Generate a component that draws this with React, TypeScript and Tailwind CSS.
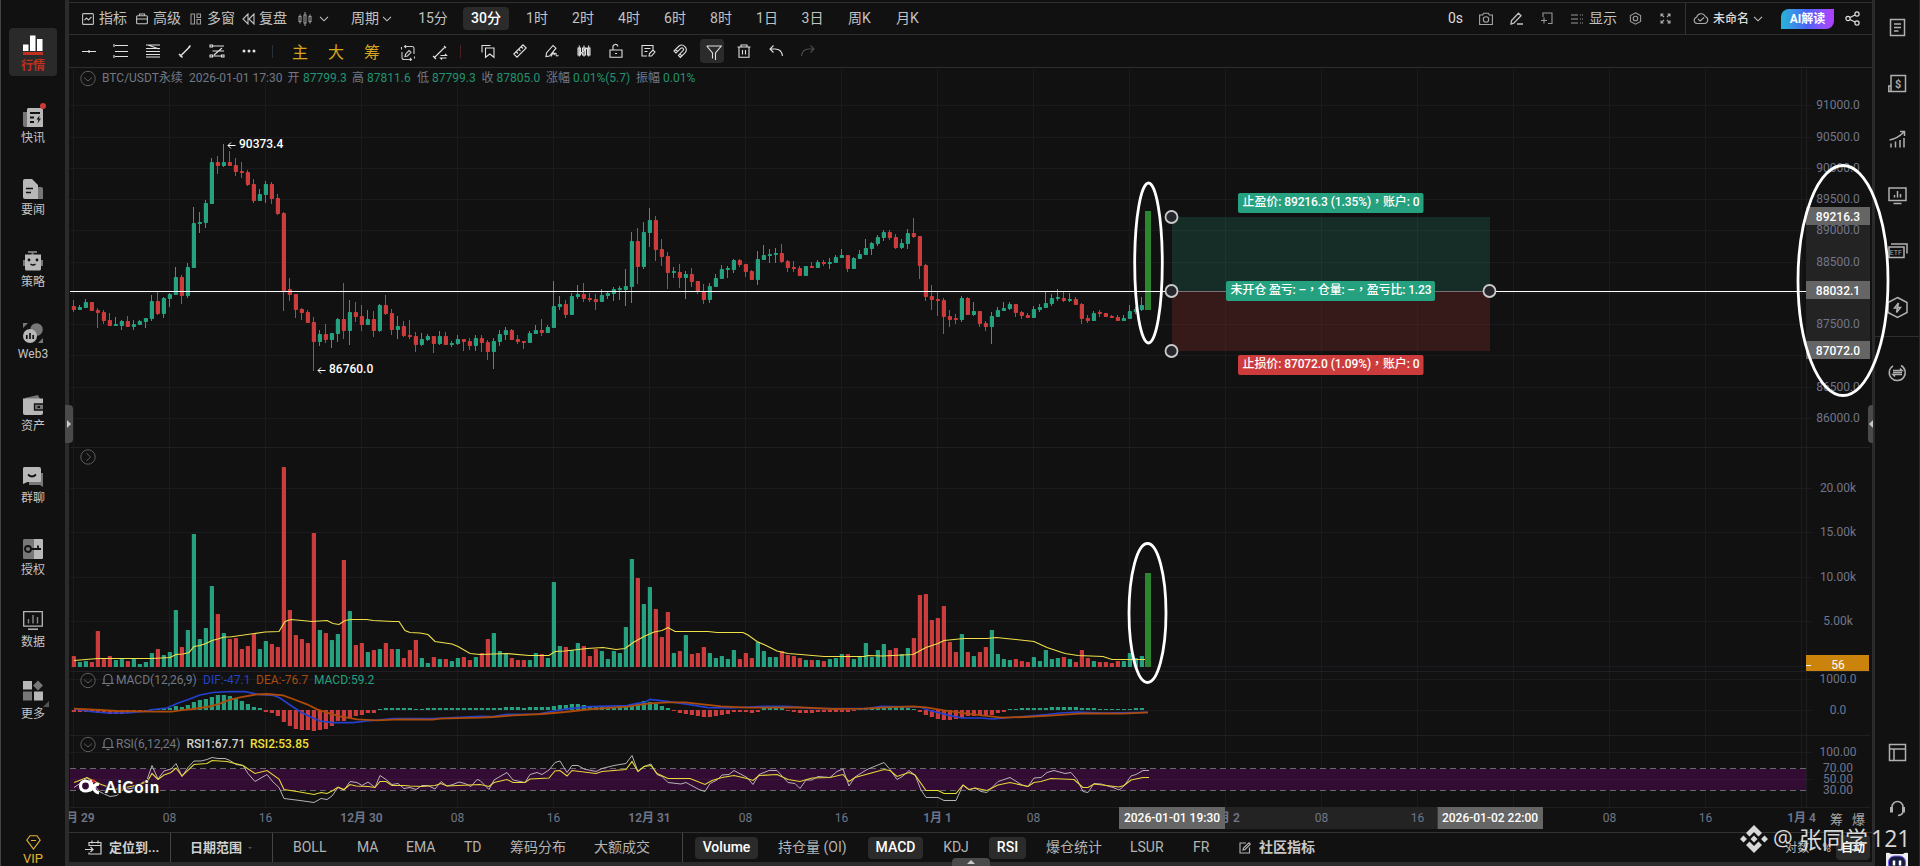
import type { ReactNode } from "react";

// [direction, body top, body bottom, high, low]
const CANDLES: [number, number, number, number, number][] = [
  [0, 306, 310, 300, 312], [1, 307, 310, 305, 310], [1, 302, 308, 299, 308], [0, 302, 311, 302, 311], [0, 310, 313, 308, 328],
  [0, 312, 321, 310, 324], [0, 320, 326, 313, 326], [1, 324, 326, 317, 326], [1, 321, 326, 320, 330], [0, 321, 327, 316, 327],
  [1, 324, 327, 320, 330], [1, 321, 325, 320, 325], [1, 318, 322, 318, 328], [1, 301, 319, 295, 321], [0, 301, 314, 291, 315],
  [1, 298, 314, 297, 318], [1, 294, 299, 293, 307], [1, 277, 295, 267, 295], [0, 277, 296, 275, 304], [1, 267, 296, 263, 298],
  [1, 223, 268, 207, 268], [1, 222, 224, 212, 233], [1, 203, 223, 200, 228], [1, 162, 204, 158, 204], [0, 162, 166, 156, 174],
  [1, 162, 166, 144, 167], [0, 162, 166, 151, 166], [0, 165, 172, 158, 176], [0, 171, 173, 162, 178], [0, 172, 185, 170, 186],
  [0, 184, 201, 179, 203], [1, 194, 201, 189, 201], [1, 184, 195, 181, 203], [0, 184, 199, 182, 204], [0, 198, 214, 194, 215],
  [0, 213, 291, 212, 311], [0, 289, 295, 278, 301], [0, 294, 310, 294, 318], [0, 309, 313, 308, 320], [0, 312, 323, 310, 323],
  [0, 322, 342, 317, 371], [1, 334, 342, 330, 346], [0, 334, 340, 324, 343], [1, 333, 340, 333, 348], [1, 319, 334, 318, 342],
  [0, 319, 331, 283, 339], [1, 312, 331, 300, 345], [0, 312, 317, 302, 322], [0, 316, 325, 305, 331], [1, 319, 325, 310, 325],
  [0, 319, 331, 311, 337], [1, 305, 331, 304, 332], [0, 305, 314, 295, 315], [0, 313, 330, 309, 335], [1, 326, 330, 316, 339],
  [0, 326, 336, 321, 337], [0, 335, 337, 320, 339], [0, 336, 345, 332, 352], [1, 339, 345, 333, 346], [1, 336, 340, 334, 341],
  [0, 336, 344, 336, 353], [1, 336, 344, 331, 345], [0, 336, 345, 332, 345], [1, 343, 345, 341, 347], [1, 339, 344, 335, 345],
  [0, 339, 342, 339, 351], [0, 341, 346, 338, 350], [1, 338, 346, 335, 351], [0, 338, 343, 335, 352], [0, 342, 352, 340, 360],
  [1, 341, 352, 338, 369], [1, 334, 342, 330, 346], [1, 330, 335, 327, 340], [0, 330, 340, 329, 340], [0, 339, 342, 335, 344],
  [0, 341, 343, 341, 349], [1, 333, 343, 331, 343], [1, 330, 334, 325, 334], [0, 330, 333, 319, 336], [1, 327, 333, 325, 333],
  [1, 306, 328, 281, 328], [1, 304, 307, 296, 310], [0, 304, 315, 300, 318], [1, 296, 315, 293, 315], [1, 294, 297, 285, 299],
  [0, 294, 299, 283, 302], [0, 298, 300, 293, 302], [0, 299, 302, 294, 310], [1, 295, 302, 289, 302], [1, 293, 296, 292, 299],
  [1, 289, 294, 287, 301], [1, 288, 290, 286, 300], [1, 286, 290, 269, 306], [1, 241, 287, 232, 303], [0, 241, 267, 228, 284],
  [1, 232, 267, 222, 269], [1, 220, 233, 208, 247], [0, 220, 250, 216, 261], [0, 249, 257, 239, 266], [0, 256, 273, 252, 289],
  [1, 271, 273, 267, 278], [0, 272, 278, 264, 288], [1, 274, 278, 271, 299], [0, 274, 282, 268, 287], [0, 281, 292, 281, 294],
  [0, 291, 300, 284, 304], [1, 286, 300, 283, 303], [1, 278, 287, 274, 287], [1, 269, 279, 265, 279], [1, 268, 270, 266, 278],
  [1, 260, 270, 259, 273], [0, 260, 265, 259, 267], [0, 264, 272, 264, 277], [0, 271, 280, 270, 280], [1, 259, 280, 251, 285],
  [1, 255, 260, 245, 260], [1, 254, 256, 249, 263], [1, 253, 255, 248, 263], [0, 253, 262, 244, 263], [0, 261, 268, 260, 272],
  [0, 267, 269, 261, 272], [0, 268, 276, 266, 276], [1, 266, 276, 266, 276], [0, 266, 268, 262, 268], [1, 262, 268, 260, 268],
  [0, 262, 264, 260, 266], [1, 262, 264, 258, 269], [1, 257, 263, 255, 263], [1, 255, 258, 249, 258], [0, 255, 269, 255, 272],
  [1, 258, 269, 257, 269], [1, 254, 259, 250, 259], [1, 248, 255, 239, 255], [1, 243, 249, 242, 255], [1, 237, 244, 235, 246],
  [1, 232, 238, 230, 241], [0, 232, 238, 230, 240], [0, 237, 248, 234, 249], [1, 243, 248, 239, 249], [1, 233, 244, 229, 249],
  [0, 233, 237, 218, 238], [0, 236, 266, 236, 279], [0, 265, 297, 264, 301], [0, 296, 300, 285, 310], [0, 299, 301, 291, 316],
  [0, 300, 317, 298, 334], [0, 316, 320, 310, 327], [0, 318, 320, 314, 324], [1, 298, 320, 296, 322], [0, 298, 315, 297, 315],
  [1, 311, 315, 302, 316], [0, 311, 324, 311, 327], [0, 323, 327, 321, 331], [1, 316, 327, 312, 344], [1, 310, 317, 307, 317],
  [1, 308, 311, 302, 311], [1, 304, 309, 302, 310], [0, 304, 313, 304, 317], [0, 312, 316, 311, 319], [0, 315, 318, 313, 318],
  [1, 309, 318, 306, 318], [1, 307, 310, 304, 312], [1, 303, 308, 292, 308], [1, 298, 304, 294, 306], [1, 297, 299, 289, 301],
  [0, 298, 301, 292, 302], [1, 299, 301, 293, 302], [0, 299, 305, 297, 305], [0, 304, 319, 303, 324], [0, 318, 321, 315, 323],
  [1, 313, 321, 311, 321], [0, 312, 314, 310, 317], [0, 313, 317, 313, 317], [0, 316, 318, 315, 318], [0, 317, 321, 315, 321],
  [1, 318, 321, 315, 321], [1, 311, 319, 305, 319], [1, 309, 312, 307, 314], [1, 305, 310, 297, 311],
];

const VOLUMES = [
  11, 5, 6, 5, 36, 8, 11, 7, 8, 6, 8, 3, 5, 14, 18, 12, 15, 57, 20, 37, 133, 28, 39, 81, 53, 34, 28, 29, 18, 21,
  33, 18, 26, 23, 20, 200, 57, 32, 28, 24, 134, 37, 34, 27, 33, 107, 56, 22, 24, 15, 17, 18, 24, 18, 18, 9, 17, 27, 9, 4,
  10, 8, 8, 6, 9, 10, 7, 10, 14, 28, 34, 16, 13, 9, 7, 7, 7, 14, 13, 9, 85, 21, 20, 17, 24, 21, 11, 18, 16, 8,
  16, 14, 40, 108, 89, 63, 80, 58, 30, 55, 14, 16, 32, 13, 14, 20, 14, 9, 11, 8, 17, 8, 14, 9, 25, 16, 10, 10, 16, 12,
  11, 9, 7, 7, 7, 6, 8, 9, 13, 13, 8, 10, 24, 10, 17, 23, 17, 19, 13, 19, 29, 72, 73, 47, 49, 61, 25, 15, 33, 15,
  11, 15, 20, 37, 13, 8, 7, 8, 6, 5, 10, 6, 17, 8, 9, 10, 8, 5, 17, 9, 6, 5, 5, 4, 6, 6, 14, 9, 11,
];

const MACD_BARS = [
  -2, -2, -2, -2, -3, -3, -4, -4, -4, -3, -3, -2, -2, 1, 1, 2, 2, 4, 3, 5, 8, 10, 11, 13, 15, 15, 14, 11, 9, 6,
  3, 2, -2, -3, -6, -12, -16, -19, -20, -20, -21, -20, -19, -16, -11, -11, -8, -6, -5, -3, -3, 1, 2, 2, 2, 2, 2, 1, 1, 2,
  2, 2, 2, 2, 2, 2, 2, 2, 2, 2, 2, 2, 3, 3, 3, 2, 3, 3, 3, 3, 4, 5, 5, 6, 6, 5, 4, 4, 4, 3,
  3, 4, 4, 5, 7, 9, 8, 6, 4, 2, -1, -3, -4, -5, -6, -7, -7, -6, -5, -4, -2, -2, -2, -3, -2, 2, 2, 2, 2, -1,
  -2, -3, -3, -3, -2, -2, -2, -2, -2, -2, -1, 1, 2, 3, 3, 3, 3, 3, 3, 2, 1, -2, -5, -7, -9, -10, -10, -9, -8, -6,
  -6, -5, -5, -5, -3, -2, 1, 1, 2, 2, 2, 2, 2, 3, 3, 3, 3, 3, 2, 2, 2, 1, 1, 1, 1, 1, 1, 2, 2,
];

const VOLUME_MA =
  "74,660.5 86,659.5 98,658.5 152,658.5 170,657.5 176,654.5 183,654 189,652.5 194,646.5 200,645.5 206,643.5 212,640.5 218,639 224,637 230,637 265,632 279,631.5 285,621.5 291,619.5 302,620.5 312,621.5 327,620.5 333,623.5 339,624.5 345,620.5 351,619.5 367,619.5 373,620.5 393,621.5 399,621.5 405,630.5 410,632.5 420,633 428,634.5 435,641.5 452,644 458,646.5 470,653.5 480,654.5 507,653.5 529,655.5 549,655.5 555,651.5 565,651 587,648.5 603,647.5 616,649.5 625,648.5 634,642 645,636 654,632 662,630.5 668,627.5 675,631.5 708,631.5 717,632.5 743,632.5 748,635 757,641.5 766,645.5 777,651 788,653.5 801,654.5 824,656.5 864,656.5 868,655.5 882,656 913,654.5 926,647.5 938,643.5 944,640.5 964,638.5 987,638.5 996,637.5 1016,639.5 1034,641.5 1047,647.5 1065,653.5 1078,655.5 1103,656.5 1112,659.5 1145,659.5";

const DIF =
  "74,709 90,711.5 107,713 127,713 144,711.5 153,709.5 167,708 177,703.5 187,700 200,695 213,692.5 230,691.5 245,691.7 258,694.3 273,695.3 280,698 290,705 300,711.5 310,716.7 320,721 333,722.7 353,722.7 367,721 393,718.7 433,718.7 480,716.3 493,716.7 507,714.3 538,714 554,711 569,708.7 589,706.7 627,705.7 636,703.7 645,702.3 650,699.3 667,701.3 690,704.7 708,707.7 730,708 766,706.3 788,706.3 810,708.3 868,708.7 881,706.3 920,707 929,710.3 949,715.3 962,718 980,718 993,719 1016,717 1047,714.7 1060,713 1078,712 1105,713 1148,712.3";
const DEA =
  "74,708.7 100,710 117,711 153,711.7 172,711.7 180,710.3 193,709 207,707 217,704.7 230,699.7 240,697.3 257,694.3 267,694 283,695.3 293,699 307,704.3 317,709.3 327,712.7 340,716.3 357,719.3 377,720.3 400,719.3 433,719.7 440,718.7 480,717.7 493,717 513,715.3 542,714 565,712 592,709 627,706.7 650,703.3 668,702.3 685,702.3 703,704.3 721,706.3 748,707.7 801,707.3 833,709 864,708.7 886,707.3 913,706.3 926,707.3 944,710.3 967,713.7 984,715.7 1002,717.7 1025,717 1050,715.7 1083,713.3 1123,713.7 1148,712.3";
const RSI1 =
  "74,787.5 80,783.5 87,777.5 93,784 100,792 110,796.5 117,795.5 122,790 133,788 147,780 152,765.5 158,779 164,771 171,769 176,763.5 182,776.5 188,767.5 194,761 201,761 207,759.5 212,757.5 218,758.5 225,758.5 230,760.5 236,764.5 243,765.5 248,773.5 255,781.5 267,774.5 273,782 279,787.5 284,798.5 300,800.5 314,802.5 321,798.5 327,799.5 332,796 338,787.5 344,790 350,781.5 357,782.5 362,785.5 368,782 375,787.5 380,775.5 386,779.5 392,784.5 398,783.5 404,788.5 410,787.5 416,789.5 422,785.5 428,785.5 435,789 441,781.5 447,786 453,784.5 459,782 465,783.5 471,786.5 477,779.5 480,780.5 489,789.5 494,780 507,772.5 513,780 525,782.5 530,774.5 537,772.5 542,774.5 549,770 555,762.5 560,761 567,772.5 572,765.5 578,765.5 584,769 596,771.5 602,768.5 614,765.5 626,763.5 632,755.5 638,771.5 644,766.5 651,764 657,774.5 662,776.5 668,782.5 681,784 686,782.5 699,789.5 705,791.5 710,783.5 717,780 722,775 729,774.5 734,770.5 747,777.5 753,784.5 759,774.5 769,770.5 777,770.5 788,782.5 795,783.5 800,788.5 806,780 812,780 818,776.5 830,777.5 837,771.5 843,769 849,786 855,777 867,769.5 884,762.5 890,769.5 897,779.5 903,776 909,770.5 915,775 921,790 926,797.5 938,797.5 944,800.5 956,800.5 963,785 969,790 975,788 981,791.5 987,792.5 998,781.5 1010,777.5 1022,785 1028,786.5 1034,778 1041,777.5 1047,772.5 1054,770.5 1065,773.5 1071,772.5 1077,779.5 1083,791.5 1088,792.5 1094,783.5 1101,784 1113,787.5 1119,790 1124,786 1131,776 1136,774.5 1143,770.5 1149,770.5";
const RSI2 =
  "74,782.5 87,777.5 100,784 115,789.5 133,786 147,782 152,773.5 158,779.5 164,775 171,772.5 176,768 182,776 194,764.5 207,763.5 212,760.5 227,761.5 243,765.5 255,773.5 267,770.5 279,779 284,789.5 297,791.5 314,794.5 321,792.5 327,793.5 333,790.5 338,787 344,789.5 350,784.5 356,786 368,786.5 375,787.5 380,781.5 386,781.5 392,785.5 404,785.5 410,786 422,786.5 435,785.5 441,783.5 447,786 480,784.5 489,786.5 494,782.5 507,779.5 513,782.5 525,782.5 530,779 549,778 555,771 560,770.5 567,776 572,770.5 596,773.5 602,771.5 626,769.5 632,761.5 638,771.5 644,766.5 651,765.5 657,773.5 668,778.5 690,778.5 705,784.5 712,780.5 722,777.5 734,775.5 747,778.5 753,780.5 759,775.5 777,774.5 788,779.5 800,781.5 812,778 830,777.5 843,774.5 849,781.5 855,777.5 884,769.5 890,770.5 897,776.5 909,772.5 915,775 926,790.5 938,790.5 944,793.5 956,793.5 963,785 969,789.5 975,788 987,790.5 998,785 1010,782.5 1028,786.5 1034,782.5 1041,781.5 1051,778.5 1074,779.5 1083,787.5 1088,787.5 1094,784 1119,787 1124,785.5 1131,780 1143,777.5 1149,777.5";

const GRID_Y = [105, 137, 168, 199, 230, 262, 293, 324, 355, 387, 418, 488, 532, 577, 621, 666, 679, 710, 752, 779];
const PANE_Y = [447, 671, 735, 807];

const PRICE_LABELS: [string, number][] = [
  ["91000.0", 105], ["90500.0", 137], ["90000.0", 168], ["89500.0", 199], ["89000.0", 230], ["88500.0", 262],
  ["87500.0", 324], ["86500.0", 387], ["86000.0", 418], ["20.00k", 488], ["15.00k", 532], ["10.00k", 577],
  ["5.00k", 621], ["1000.0", 679], ["0.0", 710], ["100.00", 752], ["70.00", 768], ["50.00", 779], ["30.00", 790],
];

const TIME_LABELS: [string, number, boolean?][] = [
  ["12月 29", 73.5, true], ["08", 169.5], ["16", 265.5], ["12月 30", 361.5, true], ["08", 457.5], ["16", 553.5],
  ["12月 31", 649.5, true], ["08", 745.5], ["16", 841.5], ["1月 1", 937.5, true], ["08", 1033.5], ["1月 2", 1225.5, true],
  ["08", 1321.5], ["16", 1417.5], ["08", 1609.5], ["16", 1705.5], ["1月 4", 1801.5, true],
];

const UP = "#26a17f";
const DOWN = "#cd3c3c";

type IconProps = { w?: number; h?: number; box?: string; className?: string; sw?: number; children: ReactNode };

const Icon = ({ w = 14, h, box = "0 0 14 14", className = "", sw = 1.1, children }: IconProps) => (
  <svg width={w} height={h ?? w} viewBox={box} className={`shrink-0 ${className}`} fill="none" stroke="currentColor" strokeWidth={sw}>
    {children}
  </svg>
);

const Chevron = () => (
  <Icon w={10} h={6} box="0 0 10 6">
    <path d="M1 .8 5 4.8 9 .8" />
  </Icon>
);

const SIDE_ITEMS: { label: string; icon: ReactNode; active?: boolean; dot?: boolean }[] = [
  {
    label: "行情",
    active: true,
    icon: (
      <>
        <path fill="#fff" d="M0 9.5h5.5V16H0zM7 .5h5.5V16H7zM14 4h5.500v12H14z" />
        <path fill="#bf3020" d="M0 17h20v3H0z" />
      </>
    ),
  },
  {
    label: "快讯",
    dot: true,
    icon: (
      <>
        <path fill="#777" d="M0 5h5v15H2a2 2 0 0 1-2-2z" />
        <path fill="#b8b8b8" d="M5 1h13a2 2 0 0 1 2 2v17H4V2z" />
        <path stroke="#111" strokeWidth="1.8" d="M7 6h10M7 10.500h4M7 15h4" />
        <path fill="#111" d="m16.500 8.500-3 4h2l-1 4 3.500-5h-2z" />
      </>
    ),
  },
  {
    label: "要闻",
    icon: (
      <>
        <path fill="#777" d="M12 8h6a2 2 0 0 1 2 2v10h-8z" />
        <path fill="#b8b8b8" d="M2 0h7l6 6v14H2a2 2 0 0 1-2-2V2a2 2 0 0 1 2-2z" />
        <path stroke="#111" strokeWidth="1.6" d="M3 9.500h7M3 13.500h5" />
      </>
    ),
  },
  {
    label: "策略",
    icon: (
      <>
        <path fill="#777" d="M5 0h9v2h-3.500v2h-2V2H5zM0 9h2v6H0zM18 9h2v6h-2z" />
        <path fill="#b8b8b8" d="M2 3.500h16V18a1.500 1.500 0 0 1-1.500 1.500h-13A1.500 1.500 0 0 1 2 18z" />
        <circle cx="6" cy="9" r="1.400" fill="#111" />
        <circle cx="14" cy="9" r="1.400" fill="#111" />
        <path stroke="#111" strokeWidth="1.500" d="M7.500 13q2.500 2 5 0" />
      </>
    ),
  },
  {
    label: "Web3",
    icon: (
      <>
        <path fill="#777" d="M0 0h5L0 5zM20 20h-5l5-5z" />
        <circle cx="13.500" cy="6.500" r="6.300" fill="#777" />
        <circle cx="7" cy="13" r="7" fill="#b8b8b8" />
        <path stroke="#111" strokeWidth="1.700" d="M3.800 12v4M7 10v6M10.200 12v4" />
      </>
    ),
  },
  {
    label: "资产",
    icon: (
      <>
        <path fill="#777" d="m2 3 13-3 2 4H2z" />
        <path fill="#b8b8b8" d="M0 3.500h20V18a2 2 0 0 1-2 2H2a2 2 0 0 1-2-2z" />
        <path stroke="#111" strokeWidth="1.300" fill="#777" d="M20 9h-8.500v6H20" />
        <path fill="#111" d="M14.500 11h2.500v2h-2.500z" />
      </>
    ),
  },
  {
    label: "群聊",
    icon: (
      <>
        <path fill="#777" d="M16 6h4v14l-3-2H6v-3h10z" />
        <path fill="#b8b8b8" d="M1 0h15a2 2 0 0 1 2 2v13H4.500L0 17V1z" />
        <path stroke="#111" strokeWidth="1.800" d="M5 7.500q4 4 8 0" />
      </>
    ),
  },
  {
    label: "授权",
    icon: (
      <>
        <path fill="#777" d="M1 0h10v20H1a1 1 0 0 1-1-1V1z" />
        <path fill="#b8b8b8" d="M11 0h8a1 1 0 0 1 1 1v18a1 1 0 0 1-1 1h-8z" />
        <circle cx="5" cy="10" r="3" stroke="#111" strokeWidth="1.800" />
        <path stroke="#111" strokeWidth="1.800" d="M8 10h10M15 10V6.500" />
      </>
    ),
  },
  {
    label: "数据",
    icon: (
      <>
        <path stroke="#b8b8b8" strokeWidth="1.300" d="M.7 .7h18.600v14.500H.7z" />
        <path stroke="#b8b8b8" strokeWidth="1.500" d="M5 18.200h10" />
        <path stroke="#888" strokeWidth="1.400" d="M5.500 8v4.500M10 4v8.500M14.500 6v6.500" />
      </>
    ),
  },
  {
    label: "更多",
    icon: (
      <>
        <path fill="#b8b8b8" d="M0 -2h9v8.500H0zM11 8.500h9v9h-9z" />
        <path fill="#777" d="M0 8.500h9v9H0zM15 -2.500l5 5-5 5-5-5z" />
      </>
    ),
  },
];

const Sidebar = () => (
  <aside className="relative flex w-[65px] shrink-0 flex-col border-l border-[#444] bg-[#111] pt-[28px]">
    <nav className="flex flex-col items-center gap-6">
      {SIDE_ITEMS.map((item) => (
        <div
          key={item.label}
          className={`relative flex h-12 w-12 flex-col items-center rounded pt-[7px] ${item.active ? "bg-[#2a2a2a]" : ""}`}
        >
          <svg width="20" height="20" viewBox="0 0 20 20" fill="none" className="overflow-visible">
            {item.icon}
          </svg>
          <span
            className={`mt-[4px] text-[12px] leading-[14px] whitespace-nowrap ${
              item.active ? "font-bold text-[#c0301f]" : "text-[#c4c4c4]"
            }`}
          >
            {item.label}
          </span>
          {item.dot && <span className="absolute top-[3px] right-[11px] h-[6px] w-[6px] rounded-full bg-[#d03a36]" />}
        </div>
      ))}
    </nav>
    <svg className="absolute top-[701px] left-[42px]" width="6" height="6" viewBox="0 0 6 6">
      <path d="M6 0v6H0z" fill="#555" />
    </svg>
    <div className="mt-[111px] flex flex-col items-center text-[#e2b32f]">
      <Icon w={15} h={15} box="0 0 15 15">
        <path d="M4 .8h7l3.200 4.400L7.500 14 .8 5.200zM5 5.500h5" />
      </Icon>
      <span className="mt-[2px] text-[13px] leading-[14px]">VIP</span>
    </div>
  </aside>
);

const PERIODS: [string, string][] = [
  ["1时", "w-[46px]"], ["2时", "w-[46px]"], ["4时", "w-[46px]"], ["6时", "w-[46px]"], ["8时", "w-[46px]"],
  ["1日", "w-[46px]"], ["3日", "w-[45px]"], ["周K", "w-[49px]"], ["月K", "w-[47px]"],
];

const TopBar = () => (
  <div className="flex h-[32px] items-center border-b border-[#2e2e2e] pl-[13px] text-[14px] text-[#c2c2c2]">
    <Icon w={12} box="0 0 12 12">
      <rect x=".6" y=".6" width="10.800" height="10.800" rx="1" />
      <path d="m2.500 7 2-2 2 2 3-3" />
    </Icon>
    <span className="ml-[5px] w-[37px]">指标</span>
    <Icon w={12} box="0 0 12 12">
      <rect x=".6" y="2.800" width="10.800" height="8" rx="1" />
      <path d="M3.500 2.800V1h5v1.800M.6 6h10.800" />
    </Icon>
    <span className="ml-[5px] w-[37px]">高级</span>
    <Icon w={12} box="0 0 12 12" className="text-[#9a9a9a]">
      <path d="M1 1h3.500v10H1zM7 1h3.500v3.500H7zM7 6.500h3.500V11H7z" />
    </Icon>
    <span className="ml-[5px] w-[34px]">多窗</span>
    <Icon w={13} h={12} box="0 0 13 12" className="ml-[1px]">
      <path d="M6 1 1 6l5 5zM12 1 7 6l5 5z" />
    </Icon>
    <span className="ml-[4px] w-[39px]">复盘</span>
    <Icon w={14} className="text-[#9a9a9a]">
      <path d="M1 4.500h2v5H1zM6 3h2v8H6zM11 4.500h2v5h-2zM2 2.500v2M2 9.500v2M7 0v3M7 11v3M12 2.500v2M12 9.500v2" />
    </Icon>
    <span className="ml-[7px] w-[32px]">
      <Chevron />
    </span>
    <span className="w-[31px]">周期</span>
    <span className="w-[28px]">
      <Chevron />
    </span>
    <span className="w-[46px] text-center">15分</span>
    <span className="mr-[5px] ml-[7px] flex h-[23px] w-[46px] items-center justify-center rounded bg-[#2b2b2b] font-medium text-white">
      30分
    </span>
    {PERIODS.map(([label, width]) => (
      <span key={label} className={`text-center ${width}`}>
        {label}
      </span>
    ))}
    <div className="ml-auto flex h-full items-center">
      <span className="w-[31px] text-[#ddd]">0s</span>
      <Icon w={14} className="text-[#a5a5a5]">
        <path d="M.6 3h3l1-1.800h4.800l1 1.800h3v9.500H.6z" />
        <circle cx="7" cy="7.500" r="2.700" />
      </Icon>
      <Icon w={13} box="0 0 13 13" className="ml-[17px]" sw={1.3}>
        <path d="m1 12 .5-3.500L8.500 1.200l2.500 2.500-7.200 7.500zM7 12h6" />
      </Icon>
      <Icon w={13} box="0 0 13 13" className="ml-[17px] text-[#999]">
        <path d="M3 5V1h9v10.500H8M1 8.500h6M4 5.500v6" />
      </Icon>
      <Icon w={12} box="0 0 12 12" className="ml-[18px] text-[#999]">
        <path d="M0 2h7M0 6h7M0 10h7" />
        <path strokeDasharray="1 1" d="M9 2h3M9 6h3M9 10h3" />
      </Icon>
      <span className="ml-[6px] w-[40px]">显示</span>
      <Icon w={13} box="0 0 13 13" className="text-[#999]">
        <path d="M6.500.8 11.600 3.600v5.800L6.500 12.200 1.400 9.400V3.600z" />
        <circle cx="6.500" cy="6.500" r="2.300" />
      </Icon>
      <Icon w={11} box="0 0 11 11" className="ml-[18px] text-[#aaa]">
        <path d="M1 3.500V1h2.500M7.500 1H10v2.500M10 7.500V10H7.500M3.500 10H1V7.500M1 1l3 3M10 1 7 4M10 10 7 7M1 10l3-3" />
      </Icon>
      <span className="mr-[7px] ml-[14px] h-full w-px bg-[#333]" />
      <Icon w={16} h={13} box="0 0 16 13" className="text-[#aaa]">
        <path d="M4 11.500a3.200 3.200 0 0 1-.3-6.300 4.500 4.500 0 0 1 8.500-.8 3.700 3.700 0 0 1-.2 7.100zM5 7l2.200 2L11 5.500" />
      </Icon>
      <span className="ml-[4px] w-[40px] text-[12px] font-medium whitespace-nowrap text-[#ddd]">未命名</span>
      <Chevron />
      <span className="ml-[18px] flex h-[20px] w-[53px] items-center justify-center rounded-tl-[8px] rounded-br-[8px] bg-linear-to-r from-[#24b4d8] via-[#4a62f5] to-[#b23cff] text-[12px] font-bold whitespace-nowrap text-white">
        AI解读
      </span>
      <Icon w={15} box="0 0 15 15" className="mr-[12px] ml-[11px] text-[#ddd]" sw={1.2}>
        <circle cx="3" cy="7.500" r="2.100" />
        <circle cx="12" cy="3" r="2.100" />
        <circle cx="12" cy="12" r="2.100" />
        <path d="m5 6.500 5-2.500M5 8.500l5 2.500" />
      </Icon>
    </div>
  </div>
);

const DRAW_TOOLS: ReactNode[] = [
  <path d="M0 7.500h5.500M8.500 7.500H14M7 6v3M5.500 7.500h3" />,
  <path d="M1 1.500h13M1 7.500h13M1 12.500h13M0 0v3M0 11v3" />,
  <path d="M0 1h14M0 4.500h14M0 7.500h14M0 10.500h14M0 13h14M2 1l11 4" />,
  <path d="m2 12.500 10-10M1 10l3.500 3.500M10.500 3.500l2-2" strokeWidth="1.500" />,
  <path d="M2.500 2H14M3 12h8M2.500 7H14M4 11l8-7M0 1h2.500v2H0zM0 11h2.500v2H0zM11.500 11H14v2h-2.500z" />,
  <g fill="currentColor" stroke="none">
    <circle cx="2" cy="7" r="1.500" />
    <circle cx="7" cy="7" r="1.500" />
    <circle cx="12" cy="7" r="1.500" />
  </g>,
];

const EDIT_TOOLS: ReactNode[] = [
  <path d="M1 8.500V1.500h8.500M4.500 4H13v9.300L8.800 10 4.500 13.300z" />,
  <path d="M.8 10 10 .8 13.200 4 4 13.200zM3.500 8l1.500 1.500M6 5.500 7.500 7M8.500 3 10 4.500" />,
  <path d="M1 12.500 1.500 9 8 1.500 11 4.200 4.500 12zM6 12.500c2-4.500 3.500-4.500 3-1.500 1.500-3 2.500-1.500 2 0 .3 1.300 1.500 1 2.500.5" />,
  <path d="M1 4h2.500v7H1zM5.500 4h3v7h-3zM10.500 4H13v7h-2.500zM2.300 1.500v11M7 1.500v11M11.700 1.500v11M3 10l7-6" />,
  <path d="M1 6h12v7.300H1zM4 6V3.500A2.500 2.500 0 0 1 9 2.500M6 9.500h2" />,
  <path d="M12 6V1.500H1v10.500h5M3.500 4.500h6M3.500 7.500h3M8 12l.5-2.500L12 6l2 2-3.500 4z" />,
  <path d="M1 7 6 2a4.600 4.600 0 0 1 6.400 6.400L7.400 13.400l-2-2 4.800-4.900A1.600 1.600 0 0 0 8 4.200L3 9zM2.500 5.500l2 2M6.800 9.800l2 2" />,
];

const Tool = ({ children, className = "" }: { children: ReactNode; className?: string }) => (
  <span className={`flex w-8 shrink-0 items-center justify-center ${className}`}>
    <Icon w={14} className="overflow-visible">
      {children}
    </Icon>
  </span>
);

const DrawBar = () => (
  <div className="flex h-[33px] items-center border-b border-[#2e2e2e] pl-[4px] text-[#e0e0e0]">
    {DRAW_TOOLS.map((icon, i) => (
      <Tool key={i}>{icon}</Tool>
    ))}
    <span className="mr-[9px] ml-[7px] h-[13px] w-px bg-[#26303c]" />
    {["主", "大", "筹"].map((label) => (
      <span key={label} className="w-9 pt-[3px] text-center text-[16px] leading-[20px] text-[#d9a520]">
        {label}
      </span>
    ))}
    <span className="flex w-9 items-center justify-center pt-[3px]">
      <Icon w={16} box="0 0 16 16" className="text-[#ccc]">
        <path d="M4.500 1.500h7.500a2 2 0 0 1 2 2V9M6 .2 4.500 1.500 6 3M11.500 14.500H4a2 2 0 0 1-2-2V7M10 13l1.500 1.500L10 16M1.500 4.500V2M14.500 13.500v-2M5 11.500l.7-2.500L9 5.500l2 1.800-3.500 3.700z" />
      </Icon>
    </span>
    <span className="flex w-[28px] items-center justify-center pt-[3px]">
      <Icon w={16} box="0 0 16 16">
        <path d="M2 13 13 2M1 11l3 3M12 1l2 2M8.500 10.500h6l-1.500-1.500M14.500 13h-6l1.500 1.500" />
      </Icon>
    </span>
    <span className="mr-[11px] ml-[6px] h-[13px] w-px bg-[#4a2020]" />
    {EDIT_TOOLS.map((icon, i) => (
      <Tool key={i}>{icon}</Tool>
    ))}
    <span className="mx-[4px] flex h-[24px] w-[24px] items-center justify-center rounded bg-[#2b2b2b]">
      <Icon w={16} h={15} box="0 0 16 15" className="mt-[3px] ml-[3px]">
        <path d="M.7 1h14.600L9.500 8v7M.7 1l5.800 7v5.500" />
      </Icon>
    </span>
    <Tool>
      <path d="M.5 3h13M4 3V1h6v2M2 3v10.300h10V3M5.500 6v4.500M8.500 6v4.500" />
    </Tool>
    <Tool>
      <path d="M4.500 1.500 1 5l3.500 3.500M1 5h5c4 0 7 2.500 7.500 7" />
    </Tool>
    <Tool className="text-[#4a4a4a]">
      <path d="M9.500 1.500 13 5 9.500 8.500M13 5H8C4 5 1 7.500.5 12" />
    </Tool>
  </div>
);

const CircleToggle = ({ x, y, side }: { x: number; y: number; side?: boolean }) => (
  <g fill="none" stroke="#5c5c5c" strokeWidth="1">
    <circle cx={x} cy={y} r="7.200" />
    <path d={side ? `M${x - 1.5} ${y - 4}l4 4-4 4` : `M${x - 4} ${y - 1}l4 3.500 4-3.500`} />
  </g>
);

const Bell = ({ y }: { y: number }) => (
  <path
    d={`M102 ${y + 3.5}h12M104 ${y + 3.5}v-5a4 4 0 0 1 8 0v5M106.500 ${y + 5.5}h3`}
    stroke="#747982"
    strokeWidth="1.200"
    fill="none"
  />
);

const OHLC: [number, string, boolean][] = [
  [102, "BTC/USDT永续", false], [189, "2026-01-01 17:30", false], [287.5, "开", false], [303, "87799.3", true],
  [352, "高", false], [367, "87811.6", true], [417, "低", false], [432, "87799.3", true], [481.5, "收", false],
  [496.5, "87805.0", true], [546, "涨幅", false], [573, "0.01%(5.7)", true], [636, "振幅", false], [663, "0.01%", true],
];

const HANDLES = [[1171.5, 217], [1171.5, 291], [1171.5, 351], [1489.5, 291]];

const Chart = () => (
  <svg width="1803" height="764" viewBox="69 68 1803 764" className="block shrink-0" fontSize="12">
    <g shapeRendering="crispEdges" fill="#1b1b1f">
      {GRID_Y.map((y) => (
        <rect key={y} x="70" y={y} width="1742" height="1" />
      ))}
      {Array.from({ length: 19 }, (_, k) => (
        <rect key={k} x={73 + 96 * k} y="69" width="1" height="738" />
      ))}
      {PANE_Y.map((y) => (
        <rect key={y} x="70" y={y} width="1800" height="1" fill="#202024" />
      ))}
      <rect x="1806" y="69" width="1" height="738" fill="#202024" />
      <rect x="70" y="769" width="1736" height="21" fill="#330c33" />
      <rect x="70" y="779" width="1736" height="1" fill="#3a143a" />
    </g>
    <path d="M70 768.500H1806M70 790.500H1806" stroke="#666a6e" strokeDasharray="6 4" />

    <g>
      {CANDLES.map(([up, top, bottom, high, low], i) => (
        <g key={i} fill={up ? UP : DOWN}>
          <rect x={73 + 6 * i} y={high} width="1" height={low - high} />
          <rect x={71.8 + 6 * i} y={top} width="4.200" height={bottom - top} rx="0.800" />
          <rect x={71.8 + 6 * i} y={667 - VOLUMES[i]} width="4.200" height={VOLUMES[i]} rx="0.600" />
          <rect
            x={71.8 + 6 * i}
            y={MACD_BARS[i] > 0 ? 710 - MACD_BARS[i] : 710}
            width="4.200"
            height={Math.abs(MACD_BARS[i])}
            fill={MACD_BARS[i] > 0 ? UP : DOWN}
          />
        </g>
      ))}
    </g>
    <g fill="none">
      <polyline points={VOLUME_MA} stroke="#f0e04a" strokeWidth="1.100" />
      <polyline points={DIF} stroke="#2440cf" strokeWidth="1.700" />
      <polyline points={DEA} stroke="#ad4b0a" strokeWidth="1.800" />
      <polyline points={RSI1} stroke="#b4b4b4" strokeWidth="1" />
      <polyline points={RSI2} stroke="#e8d838" strokeWidth="1.100" />
    </g>
    <rect x="1145" y="211" width="6" height="99" fill="#2e8530" />
    <rect x="1145" y="573" width="6" height="94" fill="#2e8530" />

    <rect x="70" y="291" width="1736" height="1" fill="#fff" />
    <rect x="1172" y="217" width="318" height="74" fill="#26a17f" fillOpacity=".2" />
    <rect x="1172" y="291" width="318" height="60" fill="#111" />
    <rect x="1172" y="291" width="318" height="60" fill="#cd3c3c" fillOpacity=".2" />
    <path d="M1225.500 291v60M1321.500 291v60M1417.500 291v60M1172 324.500h318" stroke="#472022" strokeOpacity=".6" />
    <rect x="1172" y="291" width="318" height="1" fill="#7a7070" />
    {HANDLES.map(([x, y]) => (
      <circle key={`${x}-${y}`} cx={x} cy={y} r="6" fill="#25272d" stroke="#c9c9c9" strokeWidth="1.800" />
    ))}
    <g fill="#fff" fontFamily='Roboto, "Noto Sans CJK TC", sans-serif' fontWeight="500" textAnchor="middle">
      <rect x="1238" y="193" width="185.500" height="20" rx="2" fill={UP} />
      <text x="1331" y="206" textLength="177">止盈价: 89216.3 (1.35%)，账户: 0</text>
      <rect x="1226" y="281" width="209" height="20" rx="2" fill={UP} />
      <text x="1331" y="294" textLength="201">未开仓 盈亏: –，仓量: –，盈亏比: 1.23</text>
      <rect x="1238" y="355" width="185.500" height="20" rx="2" fill={DOWN} />
      <text x="1331" y="368" textLength="177">止损价: 87072.0 (1.09%)，账户: 0</text>
    </g>

    <g stroke="#fff" fill="none">
      <path d="M228 145.500h7.500M231 142.500l-3 3 3 3M318 370.500h7.500M321 367.500l-3 3 3 3" />
    </g>
    <g fill="#fff" fontWeight="500">
      <text x="239" y="148">90373.4</text>
      <text x="329" y="373">86760.0</text>
    </g>

    <CircleToggle x={88} y={78.5} />
    <CircleToggle x={88} y={457} side />
    <CircleToggle x={88} y={680.5} />
    <CircleToggle x={88} y={744.5} />
    <Bell y={680} />
    <Bell y={744} />
    {OHLC.map(([x, text, value]) => (
      <text key={x} x={x} y="82" fill={value ? "#219371" : "#737884"}>
        {text}
      </text>
    ))}
    <g>
      <text x="116" y="684" fill="#737884">MACD(12,26,9)</text>
      <text x="203" y="684" fill="#2342c4">DIF:-47.1</text>
      <text x="256" y="684" fill="#a84c10">DEA:-76.7</text>
      <text x="314" y="684" fill="#26a17f">MACD:59.2</text>
      <text x="116" y="748" fill="#737884">RSI(6,12,24)</text>
      <text x="186.500" y="748" fill="#d0d0d0" fontWeight="500">RSI1:67.71</text>
      <text x="250" y="748" fill="#efe03a" fontWeight="500">RSI2:53.85</text>
    </g>

    <rect x="1806" y="225" width="64" height="117" fill="#232323" />
    <rect x="1225" y="807" width="212" height="22" fill="#232323" />
    <g fill="#70758a">
      {PRICE_LABELS.map(([label, y]) => (
        <text key={label} x="1838" y={y + 4} textAnchor="middle">
          {label}
        </text>
      ))}
      {TIME_LABELS.map(([label, x, bold]) => (
        <text key={x} x={x} y="822" textAnchor="middle" fontWeight={bold ? 600 : 400}>
          {label}
        </text>
      ))}
    </g>
    <g textAnchor="middle" fill="#fff" fontWeight="500">
      <rect x="1806" y="207" width="64" height="18" fill="#656565" />
      <rect x="1806" y="281" width="64" height="18" fill="#656565" />
      <rect x="1806" y="341" width="64" height="18" fill="#656565" />
      <text x="1838" y="221">89216.3</text>
      <text x="1838" y="295">88032.1</text>
      <text x="1838" y="355">87072.0</text>
      <rect x="1119" y="807" width="106" height="22" fill="#656565" />
      <rect x="1437.500" y="807" width="105.500" height="22" fill="#656565" />
      <text x="1172" y="822">2026-01-01 19:30</text>
      <text x="1490" y="822">2026-01-02 22:00</text>
      <rect x="1806" y="655" width="63" height="16" fill="#cb830c" />
      <rect x="1806" y="665" width="5" height="1" />
      <text x="1838" y="669" fontWeight="400">56</text>
    </g>
    <g fill="#a8a8a8" fontSize="13">
      <text x="1830" y="824">筹</text>
      <text x="1852" y="824">爆</text>
    </g>

    <g fill="none" stroke="#fff" strokeWidth="3.200">
      <circle cx="85.500" cy="786" r="5" />
      <path d="M91.500 780v8q0 2.500-4 2M99 784.500q-4-1-5 2.500 0 5 5 6" />
      <circle cx="93.500" cy="781" r="1.300" fill="#d33" stroke="#d33" strokeWidth="1" />
    </g>
    <text x="105" y="793" fill="#fff" stroke="#222" strokeWidth="2" paintOrder="stroke" fontFamily="Lato, sans-serif" fontWeight="900" fontSize="16" textLength="54">
      AiCoin
    </text>
  </svg>
);

const Pill = ({ children, className }: { children: ReactNode; className: string }) => (
  <span className={`flex h-[22px] items-center justify-center rounded bg-[#2b2b2b] font-medium text-white ${className}`}>
    {children}
  </span>
);

const BottomBar = () => (
  <div className="flex h-[30px] shrink-0 items-center border-t border-[#333] text-[14px] whitespace-nowrap text-[#b4b4b4]">
    <div className="flex h-full w-[102px] items-center border-r border-[#444] pl-[16px] text-[13px] font-bold text-[#d0d0d0]">
      <Icon w={17} h={15} box="0 0 17 15" sw={1.2}>
        <path d="M4 6V2.500h12V14H4v-1.500M4 5.500h12M7 .5v3M13 .5v3M0 9.500h8M5.500 7 8 9.500 5.500 12" />
      </Icon>
      <span className="ml-[7px]">定位到...</span>
    </div>
    <div className="flex h-full w-[102px] items-center border-r border-[#444] pl-[19px] text-[13px] font-bold text-[#d0d0d0]">
      日期范围
      <svg width="4" height="2" className="ml-[6px]">
        <path d="M0 0h4L2 2z" fill="#555" />
      </svg>
    </div>
    <span className="ml-[20px] w-[64px]">BOLL</span>
    <span className="w-[49px]">MA</span>
    <span className="w-[58px]">EMA</span>
    <span className="w-[46px]">TD</span>
    <span className="w-[84px]">筹码分布</span>
    <span className="w-[88px]">大额成交</span>
    <span className="mr-[12px] h-full w-px bg-[#444]" />
    <Pill className="w-[63px]">Volume</Pill>
    <span className="ml-[20px] w-[90px]">持仓量 (OI)</span>
    <Pill className="w-[55px]">MACD</Pill>
    <span className="w-[66px] text-center">KDJ</span>
    <Pill className="w-[37px]">RSI</Pill>
    <span className="ml-[20px] w-[84px]">爆仓统计</span>
    <span className="w-[63px]">LSUR</span>
    <span className="w-[46px]">FR</span>
    <Icon w={12} box="0 0 12 12">
      <path d="M7 1H1v10h9.500V5.500M4 8l.5-2L10 .8l1.300 1.300L6 7.500z" />
    </Icon>
    <span className="ml-[8px] font-bold text-[#c8c8c8]">社区指标</span>
    <span className="ml-auto text-[12px]">对数</span>
    <span className="ml-[13px] text-[12px]">%</span>
    <span className="mr-[2px] ml-[5px] flex h-[25px] w-[34px] items-center justify-center rounded bg-[#2b2b2b] text-[12px] font-bold text-white">
      自动
    </span>
  </div>
);

const RIGHT_ICONS: ReactNode[] = [
  <path d="M2.500 1.500h14v16h-14zM6 6h7M6 9.500h7M6 13h4.500" />,
  <>
    <path d="M3 1.500h14.500v16H3zM3 12H.8v5.500H4" />
    <text x="7" y="13.500" fontSize="11" fontWeight="bold" fill="#a8a8a8" stroke="none">$</text>
  </>,
  <path d="M3 17.500v-4M7.500 17.500v-6M12 17.500V10M16 17.500V8M1.500 10C8 9 12 6 16 2M12 1.500h4.500V6" />,
  <path d="M1 2h17v12.500H1zM5.500 17.500h8M6.500 11.500V9M9.500 11.500V5M12.500 11.500V8" />,
  <>
    <path d="M1 5h15v10.500H1zM3 2h16v9.500" />
    <text x="1.800" y="12.800" fontSize="7" fill="#a8a8a8" stroke="none">ETF</text>
  </>,
  <path d="M9.500-.5 19 4.500v10l-9.500 5-9.500-5v-10zM10.500 5 6.500 10h3L8.500 14.500l4-5h-3z" />,
];

const RightIcon = ({ children }: { children: ReactNode }) => (
  <Icon w={19} box="0 0 19 19" className="overflow-visible text-[#b0b0b0]" sw={1.5}>
    {children}
  </Icon>
);

const RightBar = () => (
  <aside className="relative flex w-[45px] shrink-0 flex-col items-center overflow-hidden border-r border-[#2b2b2b] bg-[#111]">
    <div className="flex h-[337px] w-full flex-col items-center gap-[37px] border-b border-[#2e2e2e] pt-[18px]">
      {RIGHT_ICONS.map((icon, i) => (
        <RightIcon key={i}>{icon}</RightIcon>
      ))}
    </div>
    <div className="mt-[26px]">
      <RightIcon>
        <path d="M5 2.800a8 8 0 1 0 8-.3M5 7.500h9l-2-2M14 11.500H5l2 2M5 9.500h9" />
      </RightIcon>
    </div>
    <div className="mt-[361px]">
      <RightIcon>
        <path d="M1.500 1.500h16v16h-16zM1.500 6h16M6 6v11.500" />
      </RightIcon>
    </div>
    <div className="mt-[37px]">
      <RightIcon>
        <path d="M4 12V8a5.500 5.500 0 0 1 11 0v4q0 4-5 4.500" />
        <path strokeWidth="3" d="M3.500 8v5.500M15.500 8v5.500" />
      </RightIcon>
    </div>
    <svg width="24" height="14" viewBox="0 0 24 14" className="mt-[34px] shrink-0">
      <path d="M1 1q3-1 5 1h12q2-2 5-1v13H1z" fill="#eee" />
      <rect x="3.500" y="4" width="17" height="14" rx="6" fill="#171c42" stroke="#7a5cf0" />
      <path d="M9 8.500v5M15 8.500v5" stroke="#fff" strokeWidth="2.500" />
    </svg>
  </aside>
);

const Overlay = () => (
  <svg className="pointer-events-none absolute inset-0" width="1920" height="866" viewBox="0 0 1920 866">
    <g fill="none" stroke="#fff" strokeWidth="2.800">
      <ellipse cx="1148.500" cy="263" rx="13.800" ry="80" />
      <ellipse cx="1147.500" cy="613" rx="18.500" ry="69.500" />
      <ellipse cx="1843" cy="280.500" rx="45" ry="115" />
    </g>
    <g fill="#d8d8d8">
      <path d="m1754 825 8 8-3.500 3.500-4.500-4.500-4.500 4.500-3.500-3.500zM1754 853l8-8-3.500-3.500-4.500 4.500-4.500-4.500-3.500 3.500zM1754 835.500l3.500 3.500-3.500 3.500-3.500-3.500zM1743.500 835.500l3.500 3.500-3.500 3.500-3.500-3.500zM1764.500 835.500l3.500 3.500-3.500 3.500-3.500-3.500z" />
      <g fontSize="23" fontFamily='"Open Sans", "Noto Sans CJK SC", sans-serif'>
        <text x="1773" y="846" fontSize="22">@</text>
        <text x="1799" y="848">张同学</text>
        <text x="1871" y="847">121</text>
      </g>
    </g>
  </svg>
);

const App = () => {
  return (
    <div className="relative flex h-[866px] w-[1920px] overflow-hidden bg-[#2b2b2b] font-[Roboto,'Noto_Sans_CJK_SC',sans-serif]">
      <Sidebar />
      <div className="relative ml-[4px] flex w-[1803px] shrink-0 flex-col">
        <div className="bg-[#111] pt-[2px]">
          <div className="h-px bg-[#2e2e2e]" />
          <TopBar />
          <DrawBar />
          <Chart />
          <BottomBar />
        </div>
        <div className="absolute top-[405px] -left-[4px] flex h-[38px] w-[8px] items-center justify-center rounded-r bg-[#4a4a4a]">
          <svg width="4" height="8">
            <path d="M0 0l4 4-4 4z" fill="#c8c8c8" />
          </svg>
        </div>
        <div className="absolute top-[405px] -right-[1px] flex h-[38px] w-[5px] items-center justify-center rounded-l bg-[#4a4a4a]">
          <svg width="4" height="8" className="shrink-0">
            <path d="M4 0 0 4l4 4z" fill="#c8c8c8" />
          </svg>
        </div>
        <div className="absolute bottom-0 left-[883px] flex h-[8px] w-[38px] items-center justify-center rounded-t bg-[#4a4a4a]">
          <svg width="8" height="4">
            <path d="M0 4l4-4 4 4z" fill="#c8c8c8" />
          </svg>
        </div>
      </div>
      <div className="w-[3px] shrink-0" />
      <RightBar />
      <Overlay />
    </div>
  );
};

export default App;
